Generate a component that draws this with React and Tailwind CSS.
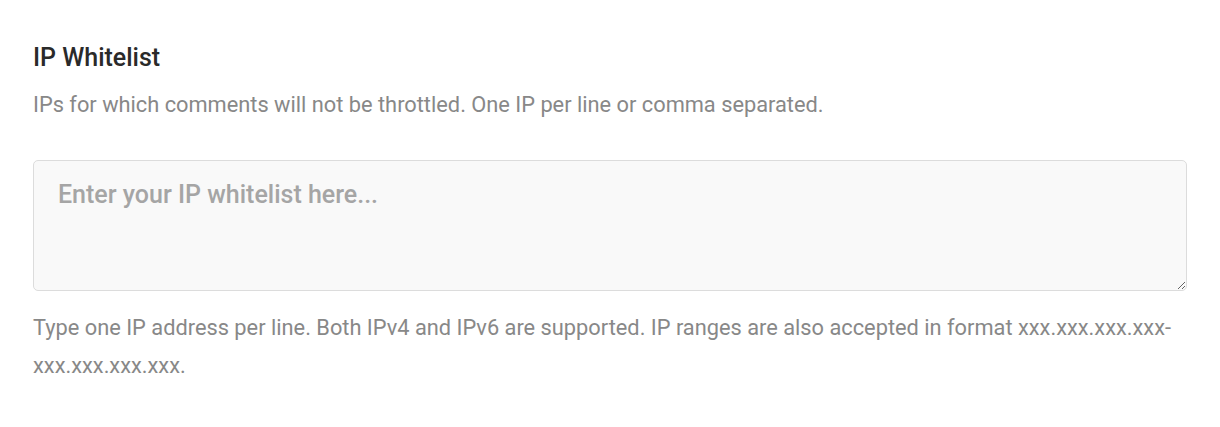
export default function App() {
  return (
    <div className="w-[1220px] h-[427px] bg-white px-[33px] pt-[42px]" style={{ fontFamily: "Roboto, 'Noto Sans', sans-serif" }}>
      <h2 className="text-[25px] leading-[32px] font-medium text-[#2a2a2a]">IP Whitelist</h2>
      <p className="mt-[16px] text-[21.8px] leading-[30px] text-[#888]">
        IPs for which comments will not be throttled. One IP per line or comma separated.
      </p>
      <textarea
        className="mt-[40px] block w-full h-[131px] bg-[#f9f9f9] border border-[#dcdcdc] rounded-[5px] px-[24px] py-[17px] text-[25px] leading-[34px] font-medium text-[#444] placeholder:text-[#a5a5a5] outline-none"
        placeholder="Enter your IP whitelist here..."
      />
      <p className="mt-[18px] text-[21.8px] leading-[38px] text-[#888]">
        Type one IP address per line. Both IPv4 and IPv6 are supported. IP ranges are also accepted in format xxx.xxx.xxx.xxx-xxx.xxx.xxx.xxx.
      </p>
    </div>
  );
}
